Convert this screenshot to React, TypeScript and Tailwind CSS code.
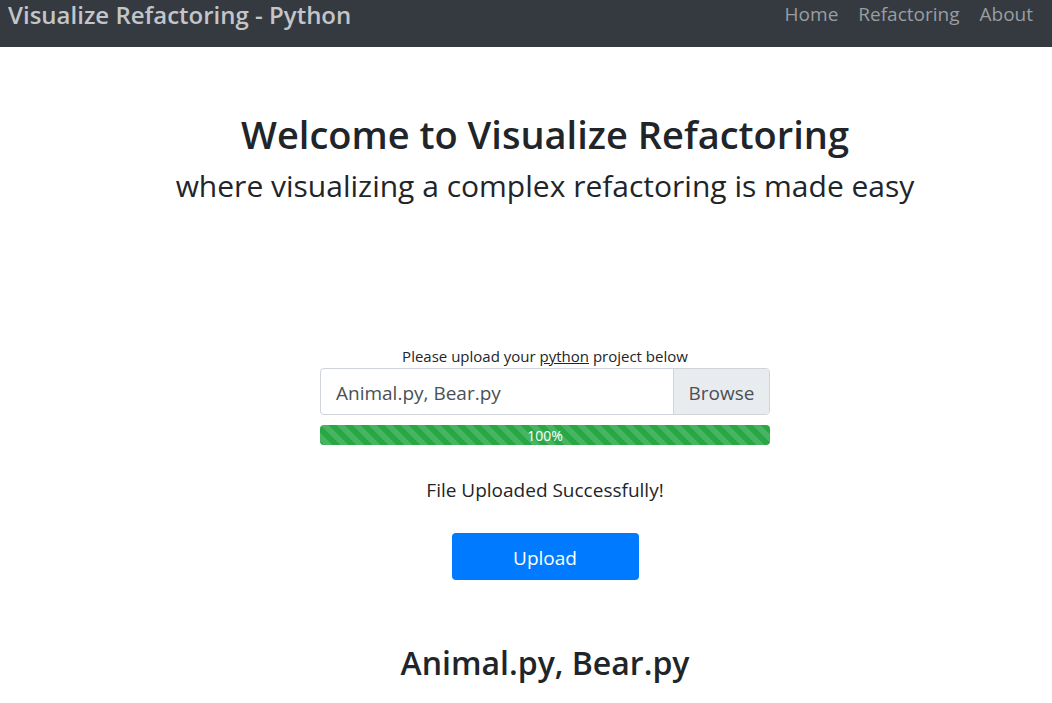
export default function App() {
  const font = { fontFamily: '"Open Sans", "Noto Sans", sans-serif' };
  return (
    <div className="min-h-[703px] bg-white text-[#212529]" style={font}>
      <nav className="h-[47px] bg-[#343a40] flex justify-between items-start pl-2 pr-[19px]">
        <div className="text-[24px] font-semibold leading-[30px] text-[#c3c5c8]">Visualize Refactoring - Python</div>
        <div className="flex gap-5 text-[19px] leading-[28px] text-[#9a9da0]">
          <span>Home</span>
          <span>Refactoring</span>
          <span>About</span>
        </div>
      </nav>
      <main className="pl-[38px] flex flex-col items-center">
        <h1 className="mt-[63px] text-[38px] leading-[48px] font-semibold">Welcome to Visualize Refactoring</h1>
        <h2 className="mt-[10px] text-[30px] leading-[36px]">where visualizing a complex refactoring is made easy</h2>
        <p className="mt-[142px] text-[15px] leading-[20px]">
          Please upload your <span className="underline">python</span> project below
        </p>
        <div className="mt-[2px] w-[450px] h-[47px] flex border border-[#ced4da] rounded-[4px] overflow-hidden">
          <div className="flex-1 flex items-center px-[15px] pt-[3px] text-[19px] text-[#495057]">Animal.py, Bear.py</div>
          <div className="w-[96px] bg-[#e9ecef] border-l border-[#ced4da] flex items-center justify-center pt-[3px] text-[19px] text-[#495057]">Browse</div>
        </div>
        <div
          className="mt-[10px] w-[450px] h-[20px] rounded-[4px] bg-[#28a745] flex items-center justify-center text-[14px] text-white"
          style={{
            backgroundImage:
              "linear-gradient(45deg, rgba(255,255,255,.15) 25%, transparent 25%, transparent 50%, rgba(255,255,255,.15) 50%, rgba(255,255,255,.15) 75%, transparent 75%, transparent)",
            backgroundSize: "16px 16px",
          }}
        >
          100%
        </div>
        <p className="mt-[33px] text-[19px] leading-[24px]">File Uploaded Successfully!</p>
        <button className="mt-[31px] w-[187px] h-[47px] rounded-[4px] bg-[#007bff] text-white text-[19px] pt-[3px]">Upload</button>
        <h3 className="mt-[63px] text-[32px] leading-[40px] font-semibold">Animal.py, Bear.py</h3>
      </main>
    </div>
  );
}
